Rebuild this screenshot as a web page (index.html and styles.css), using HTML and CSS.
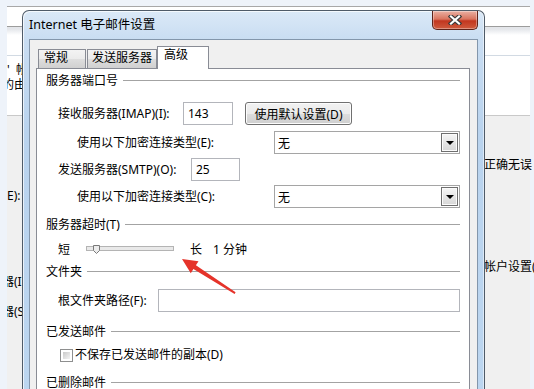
FILE: index.html
```html
<!DOCTYPE html>
<html lang="zh-CN">
  <head>
    <meta charset="UTF-8" />
    <title>Internet 电子邮件设置</title>
    <link rel="stylesheet" href="styles.css">
  </head>
  <body>
    <!-- window behind the dialog -->
    <div class="bg-window">
      <div class="bg-left">
        <p class="bg-line l1">'&nbsp; 帐户</p>
        <p class="bg-line l2 cut">的由</p>
        <p class="bg-line l3">E):</p>
        <p class="bg-line l4 cut">器(I)</p>
        <p class="bg-line l5 cut">器(S)</p>
      </div>
      <div class="bg-mid"></div>
      <div class="bg-right">
        <p class="bg-line r1">正确无误</p>
        <p class="bg-line r2">帐户设置(A)</p>
      </div>
    </div>

    <div class="dialog">
      <div class="titlebar">
        <span class="title">Internet 电子邮件设置</span>
        <button class="close" type="button">
          <svg width="14" height="10" viewBox="0 0 14 10">
            <path d="M3 1.5 L11 8.5 M11 1.5 L3 8.5" stroke="#3a3a3a" stroke-width="4.4" stroke-linecap="square" />
            <path d="M3 1.5 L11 8.5 M11 1.5 L3 8.5" stroke="#ffffff" stroke-width="2.2" stroke-linecap="square" />
          </svg>
        </button>
      </div>

      <div class="client">
        <div class="tabs">
          <div class="tab t1">常规</div>
          <div class="tab t2">发送服务器</div>
          <div class="tab t3 active">高级</div>
        </div>

        <div class="panel">
          <div class="group g1">服务器端口号</div>

          <div class="row r-imap">
            <label class="lbl w-imap">接收服务器(IMAP)(I):</label>
            <input class="field port" type="text" value="143" />
            <button class="btn" type="button">使用默认设置(D)</button>
          </div>

          <div class="row r-enc1">
            <label class="lbl w-enc">使用以下加密连接类型(E):</label>
            <div class="combo"><span>无</span><span class="drop"></span></div>
          </div>

          <div class="row r-smtp">
            <label class="lbl w-smtp">发送服务器(SMTP)(O):</label>
            <input class="field port" type="text" value="25" />
          </div>

          <div class="row r-enc2">
            <label class="lbl w-enc">使用以下加密连接类型(C):</label>
            <div class="combo"><span>无</span><span class="drop"></span></div>
          </div>

          <div class="group g2">服务器超时(T)</div>

          <div class="row r-slider">
            <span>短</span>
            <div class="track">
              <svg class="thumb" width="7" height="9" viewBox="0 0 7 9">
                <path d="M0.5 0.5 H6.5 V5.5 L3.5 8.5 L0.5 5.5 Z" fill="#ececec" stroke="#7a7a7a" />
              </svg>
            </div>
            <span class="long">长</span>
            <span class="minutes">1 分钟</span>
          </div>

          <div class="group g3">文件夹</div>

          <div class="row r-path">
            <label class="lbl w-path">根文件夹路径(F):</label>
            <input class="field path" type="text" value="" />
          </div>

          <div class="group g4">已发送邮件</div>

          <div class="row r-check">
            <span class="check"></span>
            <span class="check-text">不保存已发送邮件的副本(D)</span>
          </div>

          <div class="group g5">已删除邮件</div>
        </div>
      </div>
    </div>

    <!-- red annotation arrow -->
    <svg class="arrow" width="534" height="389" viewBox="0 0 534 389">
      <polygon points="182,259 198.5,261.2 195.9,265.3 235.6,292.2 234.6,293.9 193.4,268.9 190.8,273.2" fill="#e5332a" />
    </svg>
  </body>
</html>
```

FILE: styles.css
```css
* {
  margin: 0;
  padding: 0;
  box-sizing: border-box;
}
body {
  position: relative;
  width: 534px;
  height: 389px;
  overflow: hidden;
  background-color: #eef3fa;
  font-family: "Noto Sans", "Noto Sans CJK SC", sans-serif;
  font-size: 12px;
  color: #000;
}

/* background window */
.bg-window {
  display: flex;
  width: 523px;
  height: 383px;
  margin: 6px 0 0 7px;
  border-top: 1px solid #a8a8a8;
  background: linear-gradient(
    to bottom,
    #ffffff 0 19px,
    #9c9c9c 19px 20px,
    #e4e6ea 20px 22px,
    #ffffff 28px 48px,
    #d2dae3 48px 49px,
    #ffffff 49px 108px,
    #c9c9c9 108px 109px,
    #f0f0f0 109px
  );
}
.bg-left {
  width: 15px;
  overflow: hidden;
}
.bg-mid {
  width: 462px;
}
.bg-right {
  width: 46px;
}
.bg-line {
  line-height: 14px;
  white-space: nowrap;
}
.bg-line.cut {
  margin-left: -5px;
}
.l1 { margin-top: 56px; }
.l2 { margin-top: 1px; }
.l3 { margin-top: 97px; }
.l4 { margin-top: 72px; }
.l5 { margin-top: 16px; }
.r1 { margin-top: 151px; }
.r2 { margin-top: 88px; }

/* dialog */
.dialog {
  position: absolute;
  left: 22px;
  top: 10px;
  width: 463px;
  height: 390px;
  padding: 0 6px;
  border: 1px solid #4f5b68;
  border-bottom: none;
  border-radius: 7px 7px 0 0;
  background: linear-gradient(to bottom, #dbe9f7 0, #c9ddf2 28px, #b9d3ee 120px, #bcd6f0 100%);
  box-shadow: inset 1px 1px 0 rgba(255, 255, 255, 0.7), inset -1px 0 0 rgba(255, 255, 255, 0.5);
}
.titlebar {
  display: flex;
  justify-content: space-between;
  align-items: flex-start;
  height: 28px;
}
.title {
  margin-top: 7px;
  line-height: 14px;
  font-size: 12.5px;
  color: #000;
}
.close {
  display: flex;
  align-items: center;
  justify-content: center;
  width: 46px;
  height: 19px;
  border: 1px solid #5e231a;
  border-top: none;
  border-radius: 0 0 5px 5px;
  background: linear-gradient(to bottom, #eab0a3 0%, #d9745f 45%, #c2361f 55%, #cf5b3e 100%);
  box-shadow: inset 0 0 0 1px rgba(255, 255, 255, 0.35);
}

.client {
  height: 352px;
  padding: 6px 0 0 6px;
  border: 1px solid #8396ab;
  background-color: #f0f0f0;
}
.tabs {
  display: flex;
  align-items: flex-end;
  height: 22px;
  margin-left: 2px;
}
.tab {
  height: 19px;
  padding: 1px 0 0 5px;
  line-height: 14px;
  border: 1px solid #898c95;
  border-bottom: none;
  background: linear-gradient(to bottom, #f3f3f3, #ebebeb 50%, #dedede 51%, #d0d0d0);
  white-space: nowrap;
}
.t1 { width: 48px; }
.t2 { width: 70px; margin-left: 1px; padding-left: 4px; }
.t3 { width: 52px; padding-left: 6px; }
.tab.active {
  position: relative;
  z-index: 1;
  height: 23px;
  margin-bottom: -1px;
  background: #ffffff;
}

.panel {
  width: 434px;
  height: 330px;
  padding: 0 9px;
  border: 1px solid #898c95;
  background-color: #ffffff;
}

.group {
  display: flex;
  align-items: center;
  height: 13px;
  line-height: 13px;
  white-space: nowrap;
}
.group::after {
  content: "";
  flex: 1;
  height: 1px;
  margin-left: 5px;
  background-color: #a3a3a3;
}
.g1 { margin-top: 5px; }
.g2 { margin-top: 10px; }
.g3 { margin-top: 9px; }
.g4 { margin-top: 13px; }
.g5 { margin-top: 14px; }

.row {
  display: flex;
  align-items: center;
  height: 23px;
  white-space: nowrap;
}
.r-imap { margin-top: 15px; padding-left: 12px; }
.r-enc1 { margin-top: 6px; padding-left: 31px; }
.r-smtp { margin-top: 4px; padding-left: 12px; }
.r-enc2 { margin-top: 4px; padding-left: 31px; }
.r-slider { margin-top: 11px; height: 14px; padding-left: 12px; }
.r-path { margin-top: 11px; padding-left: 12px; }
.r-check { margin-top: 10px; height: 14px; padding-left: 14px; }

.lbl {
  line-height: 14px;
}
.w-imap { width: 125px; }
.w-smtp { width: 133px; }
.w-enc { width: 197px; }
.w-path { width: 100px; }

.field {
  height: 23px;
  padding: 0 4px;
  border: 1px solid #b3b5bb;
  outline: none;
  background-color: #ffffff;
  font-family: inherit;
  font-size: 12px;
  color: #000;
}
.port { width: 50px; }
.r-smtp .port { width: 49px; }
.path { flex: 1; }

.btn {
  width: 107px;
  height: 23px;
  margin-left: 12px;
  border: 1px solid #707070;
  border-radius: 3px;
  background: linear-gradient(to bottom, #f2f2f2, #ebebeb 50%, #dddddd 51%, #cfcfcf);
  box-shadow: inset 0 0 0 1px #fcfcfc;
  font-family: inherit;
  font-size: 12px;
  color: #000;
}

.combo {
  display: flex;
  align-items: center;
  width: 186px;
  height: 23px;
  padding-left: 3px;
  border: 1px solid #a5a5a5;
  background-color: #ffffff;
}
.drop {
  display: flex;
  align-items: center;
  justify-content: center;
  width: 17px;
  height: 19px;
  margin: 0 1px 0 auto;
  border: 1px solid #6f6f6f;
  background: linear-gradient(to bottom, #f6f6f6, #e6e6e6 50%, #d7d7d7);
  box-shadow: inset 0 0 0 1px #fbfbfb;
}
.drop::after {
  content: "";
  border-left: 4px solid transparent;
  border-right: 4px solid transparent;
  border-top: 4px solid #000;
}

.track {
  position: relative;
  width: 88px;
  height: 14px;
  margin-left: 16px;
}
.track::before {
  content: "";
  position: absolute;
  left: 0;
  right: 0;
  top: 4px;
  height: 3px;
  border: 1px solid #b4b4b4;
  background-color: #e9e9e9;
}
.thumb {
  position: absolute;
  left: 7px;
  top: 3px;
}
.long { margin-left: 16px; }
.minutes { margin-left: 11px; }

.check {
  position: relative;
  width: 13px;
  height: 13px;
  border: 1px solid #8e8f8f;
  background-color: #ffffff;
}
.check::after {
  content: "";
  position: absolute;
  left: 2px;
  top: 2px;
  width: 7px;
  height: 7px;
  background: linear-gradient(to bottom right, #c9c9c9, #f4f4f4);
}
.check-text {
  margin-left: 2px;
  line-height: 14px;
}

.arrow {
  position: absolute;
  left: 0;
  top: 0;
  z-index: 5;
  pointer-events: none;
}
```
